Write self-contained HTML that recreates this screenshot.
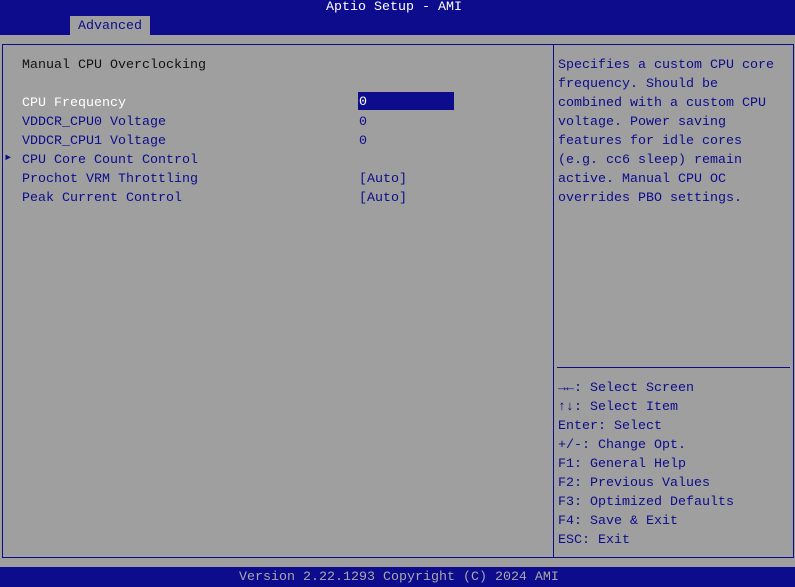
<!DOCTYPE html>
<html><head><style>
*{margin:0;padding:0}
body{width:795px;height:587px;background:#9f9f9f;position:relative;overflow:hidden;font-family:"Liberation Mono","DejaVu Sans Mono",monospace;font-size:13.33px}
.t{position:absolute;white-space:pre;line-height:19px;height:19px}
.b{color:#0c0c8c}.w{color:#fff}
</style></head><body>
<div style="position:absolute;left:0;top:0;width:795px;height:35px;background:#0c0c8c"></div>
<div class="t" style="left:326px;top:-2px;color:#fff">Aptio Setup - AMI</div>
<div style="position:absolute;left:70px;top:16px;width:80px;height:19px;background:#9f9f9f"></div>
<div class="t b" style="left:78px;top:17px">Advanced</div>
<div style="position:absolute;left:2px;top:44px;width:790px;height:512px;border:1px solid #0c0c8c"></div>
<div style="position:absolute;left:553px;top:44px;width:1px;height:513px;background:#0c0c8c"></div>
<div style="position:absolute;left:557px;top:367px;width:233px;height:1px;background:#0c0c8c"></div>
<div class="t" style="left:22px;top:56px;color:#111">Manual CPU Overclocking</div>
<div style="position:absolute;left:358px;top:92px;width:96px;height:18px;background:#0c0c8c"></div>
<div class="t w" style="left:22px;top:94px">CPU Frequency</div>
<div class="t w" style="left:359px;top:93px">0</div>
<div class="t b" style="left:22px;top:113px">VDDCR_CPU0 Voltage</div>
<div class="t b" style="left:359px;top:113px">0</div>
<div class="t b" style="left:22px;top:132px">VDDCR_CPU1 Voltage</div>
<div class="t b" style="left:359px;top:132px">0</div>
<div class="t b" style="left:4px;top:149px;font-size:14px">▸</div>
<div class="t b" style="left:22px;top:151px">CPU Core Count Control</div>
<div class="t b" style="left:22px;top:170px">Prochot VRM Throttling</div>
<div class="t b" style="left:359px;top:170px">[Auto]</div>
<div class="t b" style="left:22px;top:189px">Peak Current Control</div>
<div class="t b" style="left:359px;top:189px">[Auto]</div>
<div class="t b" style="left:558px;top:56px">Specifies a custom CPU core
frequency. Should be
combined with a custom CPU
voltage. Power saving
features for idle cores
(e.g. cc6 sleep) remain
active. Manual CPU OC
overrides PBO settings.</div>
<div class="t b" style="left:558px;top:379px"><b>→←</b>: Select Screen
<b>↑↓</b>: Select Item
Enter: Select
+/-: Change Opt.
F1: General Help
F2: Previous Values
F3: Optimized Defaults
F4: Save &amp; Exit
ESC: Exit</div>
<div style="position:absolute;left:0;top:567px;width:795px;height:20px;background:#0c0c8c"></div>
<div class="t" style="left:239px;top:568px;color:#a8a8a8">Version 2.22.1293 Copyright (C) 2024 AMI</div>
</body></html>
